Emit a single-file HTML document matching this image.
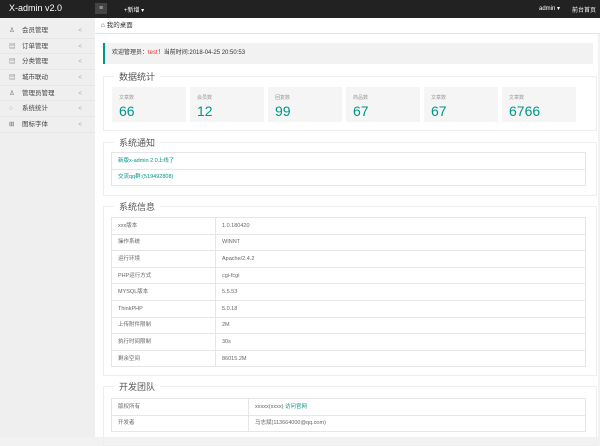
<!DOCTYPE html>
<html><head><meta charset="utf-8"><style>
*{margin:0;padding:0;box-sizing:border-box}
body{width:600px;height:437px;overflow:hidden;background:#f2f2f2;font-family:"Liberation Sans","Noto Sans CJK SC",sans-serif;font-size:6px;color:#333;position:relative}
.top{position:absolute;left:0;top:0;width:600px;height:18px;background:#222;color:#fff}
.logo{position:absolute;left:9px;top:3px;font-size:9px}
.menu{position:absolute;left:95px;top:3px;width:12px;height:11px;background:#444;color:#ccc;font-size:7px;text-align:center;line-height:11px}
.new{position:absolute;left:124px;top:5px;font-size:6px}
.adm{position:absolute;left:539px;top:5px;font-size:6px}
.home{position:absolute;left:572px;top:5px;font-size:6px}
.side{position:absolute;left:0;top:18px;width:95px;height:419px;background:#efefef}
.side div{height:15.7px;line-height:15.7px;padding-left:9px;border-bottom:1px solid #e6e6e6;font-size:6.5px;color:#444;position:relative}
.side div i{font-style:normal;display:inline-block;width:13px;color:#666}
.side div b{position:absolute;right:13px;font-weight:normal;color:#aaa}
.tab{position:absolute;left:95px;top:18px;width:505px;height:16px;background:#fff;border-bottom:1px solid #e5e5e5;line-height:16px;padding-left:6px;font-size:6.5px}
.main{position:absolute;left:95px;top:34px;width:503px;height:403px;background:#fff}
.wel{position:absolute;left:8px;top:9px;width:490px;height:21px;background:#f2f2f2;border-left:2px solid #009688;line-height:21px;padding-left:7px;font-size:6px}
.fs{position:absolute;left:8px;width:494px;border:1px solid #eee}
.lg{position:absolute;left:10px;top:-7px;background:#fff;padding:0 5px;font-size:9px;color:#555}
.card{position:absolute;top:10px;width:74px;height:35px;background:#f5f5f5}
.card s{text-decoration:none;position:absolute;left:7px;top:7px;font-size:5px;color:#999}
.card em{font-style:normal;position:absolute;left:7px;top:16px;font-size:14px;color:#009688}
table{position:absolute;left:7px;border-collapse:collapse;width:475px}
td{border:1px solid #e6e6e6;height:16.6px;line-height:14px;padding:0 0 0 6px;font-size:5.5px;color:#666;vertical-align:middle}
a{color:#009688;text-decoration:none}
</style></head><body>
<div class="top"><span class="logo">X-admin v2.0</span><span class="menu">≡</span><span class="new">+新增 ▾</span><span class="adm">admin ▾</span><span class="home">前台首页</span></div>
<div class="side">
<div style="margin-top:5px"><i>♙</i>会员管理<b>&lt;</b></div>
<div><i>▤</i>订单管理<b>&lt;</b></div>
<div><i>▤</i>分类管理<b>&lt;</b></div>
<div><i>▤</i>城市联动<b>&lt;</b></div>
<div><i>♙</i>管理员管理<b>&lt;</b></div>
<div><i>◌</i>系统统计<b>&lt;</b></div>
<div><i>⊞</i>图标字体<b>&lt;</b></div>
</div>
<div class="tab">⌂ 我的桌面</div>
<div class="main">
<div class="wel">欢迎管理员：<span style="color:#e33">test</span>！当前时间:2018-04-25 20:50:53</div>
<div class="fs" style="top:42px;height:55px"><span class="lg">数据统计</span>
<div class="card" style="left:8px"><s>文章数</s><em>66</em></div>
<div class="card" style="left:86px"><s>会员数</s><em>12</em></div>
<div class="card" style="left:164px"><s>回复数</s><em>99</em></div>
<div class="card" style="left:242px"><s>商品数</s><em>67</em></div>
<div class="card" style="left:320px"><s>文章数</s><em>67</em></div>
<div class="card" style="left:398px"><s>文章数</s><em>6766</em></div>
</div>
<div class="fs" style="top:108px;height:54px"><span class="lg">系统通知</span>
<table style="top:9px"><tr><td><a>新版x-admin 2.0上线了</a></td></tr><tr><td><a>交流qq群:(519492808)</a></td></tr></table></div>
<div class="fs" style="top:172px;height:170px"><span class="lg">系统信息</span>
<table style="top:10px">
<tr><td style="width:104px">xxx版本</td><td>1.0.180420</td></tr>
<tr><td>操作系统</td><td>WINNT</td></tr>
<tr><td>运行环境</td><td>Apache/2.4.2</td></tr>
<tr><td>PHP运行方式</td><td>cgi-fcgi</td></tr>
<tr><td>MYSQL版本</td><td>5.5.53</td></tr>
<tr><td>ThinkPHP</td><td>5.0.18</td></tr>
<tr><td>上传附件限制</td><td>2M</td></tr>
<tr><td>执行时间限制</td><td>30s</td></tr>
<tr><td>剩余空间</td><td>86015.2M</td></tr>
</table></div>
<div class="fs" style="top:352px;height:60px"><span class="lg">开发团队</span>
<table style="top:11px">
<tr><td style="width:137px">版权所有</td><td>xxxxx(xxxx) <a>访问官网</a></td></tr>
<tr><td>开发者</td><td>马志斌(113664000@qq.com)</td></tr>
</table></div>
</div>
</body></html>
